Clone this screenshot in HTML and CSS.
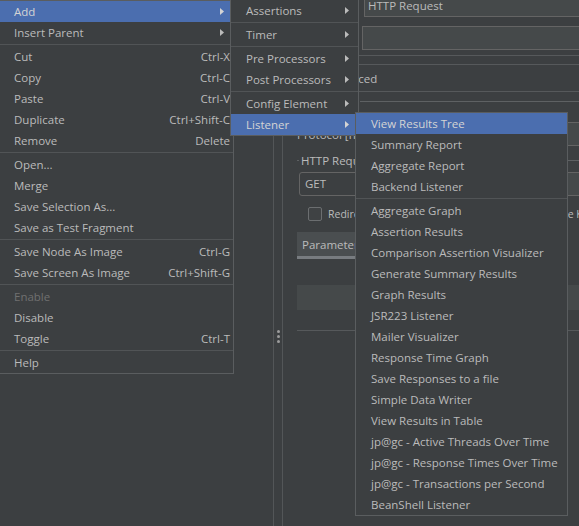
FILE: index.html
```html
<!DOCTYPE html>
<html>
<head>
<meta charset="utf-8">
<title>JMeter - Add Listener</title>
<link rel="stylesheet" href="styles.css">
</head>
<body>
<div class="app">
  <div class="tree"></div>
  <div class="splitter"><div class="grip"><span></span><span></span><span></span></div></div>
  <div class="editor">
    <div class="form-row name-row"><span class="row-label name-label">Name:</span><div class="field grow">HTTP Request</div></div>
    <div class="form-row comments-row"><span class="row-label comments-label">Comments:</span><div class="field grow"></div></div>
    <div class="rule"></div>
    <div class="mode-tabs"><span class="mode-tab">Basic</span><span class="mode-tab">Advanced</span></div>
    <div class="group web-group">
      <div class="group-title"><span>Web Server</span></div>
      <div class="group-row">
        <span class="row-label">Protocol [http]:</span>
        <div class="field small"></div>
        <span class="row-label">Server Name or IP:</span>
        <div class="field grow"></div>
      </div>
    </div>
    <div class="group req-group">
      <div class="group-title"><span>HTTP Request</span></div>
      <div class="group-row">
        <div class="combo">GET</div>
        <span class="row-label">Path:</span>
        <div class="field grow"></div>
      </div>
      <div class="checks">
        <div class="check"><span class="box"></span>Redirect Automatically</div>
        <div class="check"><span class="box"></span>Follow Redirects</div>
        <div class="check"><span class="box"></span>Use KeepAlive</div>
      </div>
    </div>
    <div class="param-tabs"><span class="param-tab active">Parameters</span><span class="param-tab">Body Data</span><span class="param-tab">Files Upload</span></div>
    <div class="table-head"></div>
    <div class="table-rule"></div>
  </div>
</div>

<div class="menu main-menu">
  <div class="item selected"><span>Add</span><span class="arrow"><svg width="4" height="7" viewBox="0 0 4 7"><path d="M0 0L4 3.5L0 7Z" fill="currentColor"/></svg></span></div>
  <div class="item"><span>Insert Parent</span><span class="arrow"><svg width="4" height="7" viewBox="0 0 4 7"><path d="M0 0L4 3.5L0 7Z" fill="currentColor"/></svg></span></div>
  <div class="sep"></div>
  <div class="item"><span>Cut</span><span class="key">Ctrl-X</span></div>
  <div class="item"><span>Copy</span><span class="key">Ctrl-C</span></div>
  <div class="item"><span>Paste</span><span class="key">Ctrl-V</span></div>
  <div class="item"><span>Duplicate</span><span class="key">Ctrl+Shift-C</span></div>
  <div class="item"><span>Remove</span><span class="key">Delete</span></div>
  <div class="sep"></div>
  <div class="item"><span>Open...</span></div>
  <div class="item"><span>Merge</span></div>
  <div class="item"><span>Save Selection As...</span></div>
  <div class="item"><span>Save as Test Fragment</span></div>
  <div class="sep"></div>
  <div class="item"><span>Save Node As Image</span><span class="key">Ctrl-G</span></div>
  <div class="item"><span>Save Screen As Image</span><span class="key">Ctrl+Shift-G</span></div>
  <div class="sep"></div>
  <div class="item disabled"><span>Enable</span></div>
  <div class="item"><span>Disable</span></div>
  <div class="item"><span>Toggle</span><span class="key">Ctrl-T</span></div>
  <div class="sep"></div>
  <div class="item"><span>Help</span></div>
</div>

<div class="menu add-menu">
  <div class="item"><span>Assertions</span><span class="arrow"><svg width="4" height="7" viewBox="0 0 4 7"><path d="M0 0L4 3.5L0 7Z" fill="currentColor"/></svg></span></div>
  <div class="sep"></div>
  <div class="item"><span>Timer</span><span class="arrow"><svg width="4" height="7" viewBox="0 0 4 7"><path d="M0 0L4 3.5L0 7Z" fill="currentColor"/></svg></span></div>
  <div class="sep"></div>
  <div class="item"><span>Pre Processors</span><span class="arrow"><svg width="4" height="7" viewBox="0 0 4 7"><path d="M0 0L4 3.5L0 7Z" fill="currentColor"/></svg></span></div>
  <div class="item"><span>Post Processors</span><span class="arrow"><svg width="4" height="7" viewBox="0 0 4 7"><path d="M0 0L4 3.5L0 7Z" fill="currentColor"/></svg></span></div>
  <div class="sep"></div>
  <div class="item"><span>Config Element</span><span class="arrow"><svg width="4" height="7" viewBox="0 0 4 7"><path d="M0 0L4 3.5L0 7Z" fill="currentColor"/></svg></span></div>
  <div class="item selected"><span>Listener</span><span class="arrow"><svg width="4" height="7" viewBox="0 0 4 7"><path d="M0 0L4 3.5L0 7Z" fill="currentColor"/></svg></span></div>
</div>

<div class="menu listener-menu">
  <div class="item selected"><span>View Results Tree</span></div>
  <div class="item"><span>Summary Report</span></div>
  <div class="item"><span>Aggregate Report</span></div>
  <div class="item"><span>Backend Listener</span></div>
  <div class="sep"></div>
  <div class="item"><span>Aggregate Graph</span></div>
  <div class="item"><span>Assertion Results</span></div>
  <div class="item"><span>Comparison Assertion Visualizer</span></div>
  <div class="item"><span>Generate Summary Results</span></div>
  <div class="item"><span>Graph Results</span></div>
  <div class="item"><span>JSR223 Listener</span></div>
  <div class="item"><span>Mailer Visualizer</span></div>
  <div class="item"><span>Response Time Graph</span></div>
  <div class="item"><span>Save Responses to a file</span></div>
  <div class="item"><span>Simple Data Writer</span></div>
  <div class="item"><span>View Results in Table</span></div>
  <div class="item"><span>jp@gc - Active Threads Over Time</span></div>
  <div class="item"><span>jp@gc - Response Times Over Time</span></div>
  <div class="item"><span>jp@gc - Transactions per Second</span></div>
  <div class="item"><span>BeanShell Listener</span></div>
</div>
</body>
</html>
```

FILE: styles.css
```css
* { box-sizing: border-box; }

html, body {
  margin: 0;
  padding: 0;
}

body {
  width: 579px;
  height: 526px;
  overflow: hidden;
  position: relative;
  background: #3c3f41;
  color: #bbbbbb;
  font-family: "Open Sans", "Noto Sans", sans-serif;
  font-size: 11.5px;
}

/* ---------- background window ---------- */
.app {
  display: flex;
  height: 526px;
}

.tree {
  width: 273px;
  flex: none;
}

.splitter {
  width: 10px;
  flex: none;
  border-left: 1px solid #535658;
  border-right: 1px solid #535658;
  display: flex;
  flex-direction: column;
  align-items: center;
  padding-top: 330px;
}

.grip {
  display: flex;
  flex-direction: column;
  gap: 2px;
}

.grip span {
  width: 3px;
  height: 3px;
  border-radius: 50%;
  background: #9c9c9c;
}

.editor {
  flex: 1;
  min-width: 0;
  padding-left: 14px;
  overflow: hidden;
}

.form-row {
  display: flex;
  align-items: flex-end;
}

.name-row {
  height: 17px;
}

.comments-row {
  margin-top: 9px;
}

.row-label {
  flex: none;
  white-space: nowrap;
  margin-right: 6px;
}

.name-label { width: 67px; margin-right: 0; }
.comments-label { width: 65px; margin-right: 0; }

.field {
  height: 24px;
  border: 1px solid #646464;
  background: #45494a;
  padding-left: 3px;
  line-height: 23px;
  white-space: nowrap;
}

.field.grow {
  flex: 1;
  margin-right: -10px;
}

.field.small {
  width: 60px;
  flex: none;
  margin-right: 8px;
}

.rule {
  margin-top: 5px;
  border-top: 1px solid #56595b;
}

.mode-tabs {
  margin-top: 8px;
  margin-left: -14px;
  height: 28px;
  border-top: 1px solid #56595b;
  border-bottom: 1px solid #56595b;
  display: flex;
  align-items: center;
  gap: 14px;
  white-space: nowrap;
}

.group-title {
  height: 13px;
  display: flex;
  align-items: center;
  white-space: nowrap;
}

.group-title::before {
  content: "";
  width: 2px;
  height: 1px;
  background: #5e6163;
  margin-right: 2px;
}

.group-title::after {
  content: "";
  flex: 1;
  height: 1px;
  background: #5e6163;
  margin-left: 3px;
}

.web-group { margin-top: 3px; }
.web-group .group-title span { font-size: 10.5px; }
.web-group .group-row { margin-top: 14px; }

.req-group { margin-top: 8px; }
.req-group .group-row { margin-top: 5px; }

.group-row {
  display: flex;
  align-items: center;
  height: 24px;
}

.combo {
  flex: none;
  width: 70px;
  height: 24px;
  margin-left: 2px;
  margin-right: 8px;
  border: 1px solid #646464;
  border-radius: 3px;
  padding-left: 5px;
  line-height: 22px;
}

.checks {
  margin-top: 8px;
  margin-left: 11px;
  height: 20px;
  display: grid;
  grid-template-columns: 120px 107px auto;
  align-items: center;
  font-size: 10.5px;
  white-space: nowrap;
}

.check {
  display: flex;
  align-items: center;
}

.box {
  width: 14px;
  height: 14px;
  border: 1px solid #6b6e70;
  border-radius: 2px;
  background: #3f4244;
  margin-right: 6px;
  flex: none;
}

.param-tabs {
  margin-top: 8px;
  display: flex;
  white-space: nowrap;
}

.param-tab {
  height: 27px;
  padding: 2px 5px 0;
  line-height: 22px;
}

.param-tab.active {
  background: #4a4e50;
  border-bottom: 3px solid #787c80;
}

.table-head {
  margin-top: 26px;
  height: 25px;
  background: #45494a;
}

.table-rule {
  margin-top: 20px;
  border-top: 1px solid #56595b;
}

/* ---------- popup menus ---------- */
.menu {
  position: absolute;
  background: #3c3f41;
  border: 1px solid #5a5d5f;
  white-space: nowrap;
}

.main-menu {
  left: -2px;
  top: 0;
  width: 236px;
  z-index: 1;
}

.add-menu {
  left: 230px;
  top: -1px;
  width: 129px;
  z-index: 2;
}

.listener-menu {
  left: 355px;
  top: 112px;
  width: 213px;
  z-index: 3;
}

.item {
  height: 21px;
  line-height: 21px;
  padding-left: 15px;
  padding-right: 3px;
  display: flex;
  justify-content: space-between;
  align-items: center;
}

.item.selected {
  background: #4b6eaf;
  color: #d4d4d4;
}

.item.disabled {
  color: #707070;
}

.arrow {
  display: flex;
  margin-right: 6px;
}

.sep {
  height: 3px;
  padding-top: 1px;
}

.sep::before {
  content: "";
  display: block;
  height: 1px;
  background: #515456;
}
```
